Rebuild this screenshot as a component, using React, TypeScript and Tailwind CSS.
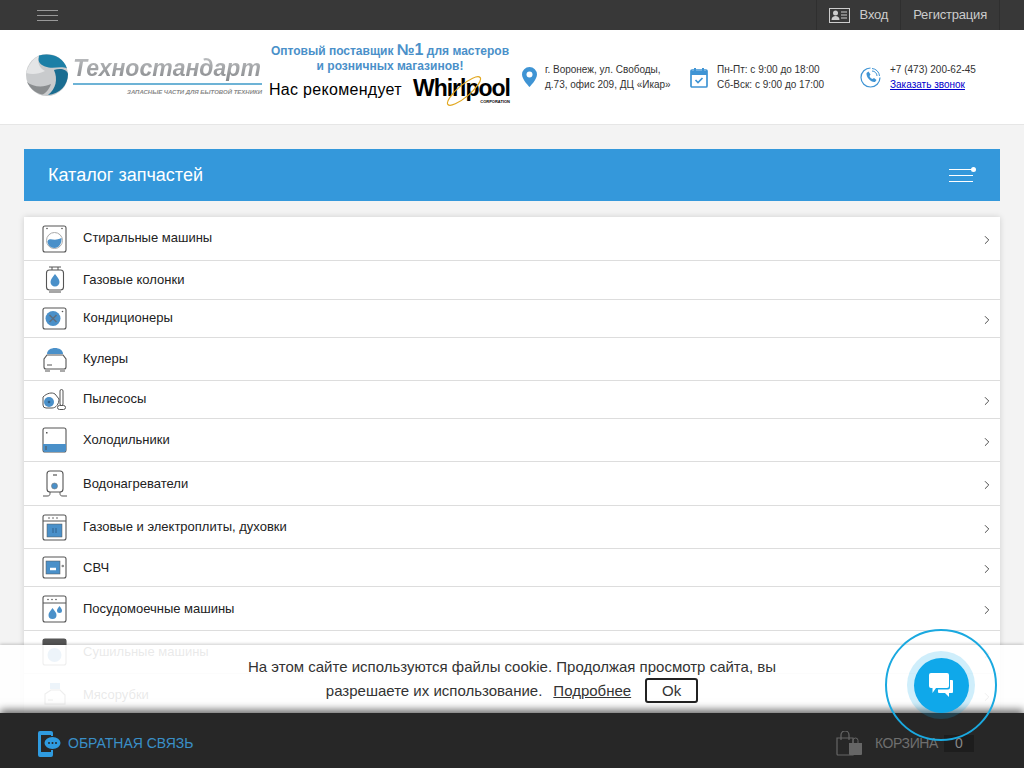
import React from 'react';
import { ChevronRight } from 'lucide-react';

const stroke = '#555555';
const blue = '#4a90c9';

function Washer() {
  return (
    <svg width="26" height="28" viewBox="0 0 26 28" fill="none">
      <rect x="1" y="1" width="23" height="26" rx="2" stroke={stroke} strokeWidth="1.1" />
      <circle cx="5" cy="3.5" r="0.8" fill={stroke} />
      <circle cx="20" cy="3.5" r="0.8" fill={stroke} />
      <circle cx="12.5" cy="15.500" r="8" stroke="#aaaaaa" strokeWidth="1" />
      <path d="M5.500 16c3-4 6 1 14-3 .5 6-3 10-7 10s-7-3-7-7z" fill={blue} />
    </svg>
  );
}

function GasHeater() {
  return (
    <svg width="26" height="28" viewBox="0 0 26 28" fill="none">
      <path d="M7 1h12M10 1v3M16 1v3" stroke={stroke} />
      <rect x="4.500" y="4" width="17" height="20" rx="3" stroke={stroke} strokeWidth="1.1" />
      <path d="M7 26h12" stroke="#888888" strokeWidth="1.500" />
      <path d="M13 8c2 3 4.500 5 4.500 8a4.500 4.500 0 0 1-9 0c0-3 2.500-5 4.500-8z" fill={blue} />
    </svg>
  );
}

function Conditioner() {
  return (
    <svg width="26" height="24" viewBox="0 0 26 24" fill="none">
      <rect x="1" y="1" width="23" height="21" rx="2" stroke={stroke} strokeWidth="1.1" />
      <circle cx="11" cy="11.5" r="7.500" fill={blue} />
      <path d="M7.500 8l7 7M14.500 8l-7 7" stroke="#5d6f80" strokeWidth="1.500" />
      <circle cx="20.500" cy="4.500" r="0.8" fill={stroke} />
    </svg>
  );
}

function Cooler() {
  return (
    <svg width="26" height="26" viewBox="0 0 26 26" fill="none">
      <path d="M5 8c0-4 4-6 8-6s8 2 8 6z" fill={blue} />
      <path d="M5 9h16l3 4v8a2 2 0 0 1-2 2H4a2 2 0 0 1-2-2v-8z" stroke={stroke} strokeWidth="1.1" />
      <path d="M5 19h5M3 25h5M18 25h5" stroke={stroke} />
    </svg>
  );
}

function Vacuum() {
  return (
    <svg width="26" height="22" viewBox="0 0 26 22" fill="none">
      <path d="M1 8c4-4 9-5 12-3l4 5c0 5-3 9-7 9H4a3 3 0 0 1-3-3z" stroke={stroke} />
      <circle cx="7" cy="13" r="5" fill={blue} />
      <circle cx="7" cy="13" r="1.300" fill="#2f5f88" />
      <rect x="18" y="0.500" width="3" height="16" rx="1.500" stroke={stroke} />
      <rect x="15.500" y="16.500" width="8" height="4" rx="2" stroke={stroke} />
    </svg>
  );
}

function Fridge() {
  return (
    <svg width="26" height="27" viewBox="0 0 26 27" fill="none">
      <rect x="1" y="1" width="23" height="24" rx="2" stroke={stroke} strokeWidth="1.1" />
      <path d="M1 17h23v6a2 2 0 0 1-2 2H3a2 2 0 0 1-2-2z" fill={blue} />
      <rect x="4" y="5" width="1.500" height="1.500" fill={stroke} />
      <rect x="3.500" y="19" width="1" height="4" fill={stroke} />
    </svg>
  );
}

function WaterHeater() {
  return (
    <svg width="26" height="28" viewBox="0 0 26 28" fill="none">
      <rect x="5" y="1" width="16" height="21" rx="3" stroke={stroke} strokeWidth="1.1" />
      <path d="M11 5h4" stroke={stroke} strokeWidth="1.200" />
      <circle cx="12.500" cy="16" r="3" fill={blue} stroke="#777777" strokeWidth="0.6" />
      <path d="M1 26h4c3 0 3-1 3-4M25 26h-4c-3 0-3-1-3-4" stroke={stroke} />
    </svg>
  );
}

function Stove() {
  return (
    <svg width="26" height="27" viewBox="0 0 26 27" fill="none">
      <rect x="1" y="1" width="23" height="25" rx="2" stroke={stroke} strokeWidth="1.1" />
      <path d="M1 7h23" stroke={stroke} />
      <circle cx="7" cy="4" r="0.8" fill={stroke} />
      <circle cx="11" cy="4" r="0.8" fill={stroke} />
      <circle cx="15" cy="4" r="0.8" fill={stroke} />
      <rect x="5" y="10" width="15" height="13" fill={blue} stroke={stroke} strokeWidth="0.5" />
      <path d="M11 14v5M14 14v5" stroke="#2f5f88" strokeWidth="0.9" />
    </svg>
  );
}

function Microwave() {
  return (
    <svg width="26" height="24" viewBox="0 0 26 24" fill="none">
      <rect x="1" y="1" width="23" height="21" rx="2" stroke={stroke} strokeWidth="1.1" />
      <rect x="4" y="5" width="14" height="13" fill={blue} stroke={stroke} strokeWidth="0.5" />
      <path d="M8 13h6" stroke="#ffffff" strokeWidth="2.500" />
      <circle cx="20.800" cy="10" r="1.300" fill="#888888" />
    </svg>
  );
}

function Dishwasher() {
  return (
    <svg width="26" height="28" viewBox="0 0 26 28" fill="none">
      <rect x="1" y="1" width="23" height="26" rx="2" stroke={stroke} strokeWidth="1.1" />
      <path d="M1 8h23" stroke={stroke} />
      <circle cx="6" cy="4.500" r="0.8" fill={stroke} />
      <circle cx="10" cy="4.500" r="0.8" fill={stroke} />
      <circle cx="14" cy="4.500" r="0.8" fill={stroke} />
      <path d="M10.500 13c2 3 4 4.500 4 7a4 4 0 0 1-8 0c0-2.500 2-4 4-7z" fill={blue} />
      <path d="M17.500 11c1.300 2 2.500 3 2.500 4.500a2.500 2.500 0 0 1-5 0c0-1.500 1.200-2.500 2.500-4.500z" fill={blue} />
    </svg>
  );
}

function Dryer() {
  return (
    <svg width="26" height="28" viewBox="0 0 26 28" fill="none">
      <rect x="1" y="1" width="23" height="26" rx="2" stroke={stroke} strokeWidth="1.1" />
      <path d="M1 1h23v6H1z" fill={stroke} />
      <circle cx="12.500" cy="17" r="7" fill={blue} />
    </svg>
  );
}

function Grinder() {
  return (
    <svg width="26" height="26" viewBox="0 0 26 26" fill="none">
      <path d="M8 1h10v6H8z" fill={blue} />
      <path d="M3 12l6-4h9l5 5v9H3z" stroke={stroke} strokeWidth="1.1" />
      <path d="M6 18h5" stroke={stroke} />
    </svg>
  );
}

const rows = [
  { name: 'Стиральные машины', icon: <Washer />, h: 'h-[44px]', text: 'mb-[2px]', arrow: true },
  { name: 'Газовые колонки', icon: <GasHeater />, h: 'h-[39px]', text: '', arrow: false },
  { name: 'Кондиционеры', icon: <Conditioner />, h: 'h-[38px]', text: 'mb-[2px]', arrow: true },
  { name: 'Кулеры', icon: <Cooler />, h: 'h-[43px]', text: '', arrow: false },
  { name: 'Пылесосы', icon: <Vacuum />, h: 'h-[38px]', text: 'mb-[2px]', arrow: true },
  { name: 'Холодильники', icon: <Fridge />, h: 'h-[43px]', text: '', arrow: true },
  { name: 'Водонагреватели', icon: <WaterHeater />, h: 'h-[44px]', text: '', arrow: true },
  { name: 'Газовые и электроплиты, духовки', icon: <Stove />, h: 'h-[43px]', text: '', arrow: true },
  { name: 'СВЧ', icon: <Microwave />, h: 'h-[38px]', text: '', arrow: true },
  { name: 'Посудомоечные машины', icon: <Dishwasher />, h: 'h-[44px]', text: '', arrow: true },
  { name: 'Сушильные машины', icon: <Dryer />, h: 'h-[43px]', text: '', arrow: true },
  { name: 'Мясорубки', icon: <Grinder />, h: 'h-[43px]', text: '', arrow: true },
];

function Logo() {
  return (
    <div className="flex items-center w-[244px] shrink-0 mb-[4px]">
      <svg width="46" height="46" viewBox="0 0 46 46" className="shrink-0">
        <circle cx="23" cy="23" r="21" fill="#c9cbcd" />
        <path d="M15 3.500c10-3 24 0 28 13-6-3-14 1-22-2-6-2-8-7-6-11z" fill="#1c7fa6" />
        <path d="M44 22c0 11-8 20-20 21 8-6 10-16 6-25 6-2 13-1 14 4z" fill="#1a6d91" />
        <path d="M3 30c6 5 16 6 24 2-2 6-6 10-9 10.500C11 41 6 36 3 30z" fill="#8a8d8f" />
        <path d="M2.500 21C4 13 9 7 15 4c-2 6 0 12 6 15-6 3-13 4-18.500 2z" fill="#e4e5e6" />
      </svg>
      <div className="ml-[3px] w-[189px] flex flex-col">
        <span className="text-[23px] leading-[28px] italic font-bold bg-gradient-to-b from-[#c2c4c6] to-[#85878a] bg-clip-text text-transparent whitespace-nowrap">Техностандарт</span>
        <div className="h-[2px] bg-[#6db3d6] mt-[1px]" />
        <span className="mt-[3px] text-[6px] leading-[8px] italic font-bold text-[#8a8a8a] text-right whitespace-nowrap">ЗАПАСНЫЕ ЧАСТИ ДЛЯ БЫТОВОЙ ТЕХНИКИ</span>
      </div>
    </div>
  );
}

function Promo() {
  return (
    <div className="w-[244px] shrink-0 flex flex-col mb-[11px]">
      <p className="text-center text-[12px] leading-[15px] font-bold text-[#4a90c9] whitespace-nowrap">
        Оптовый поставщик <span className="text-[16px]">№1</span> для мастеров
      </p>
      <p className="text-center text-[12px] leading-[15px] font-bold text-[#4a90c9]">и розничных магазинов!</p>
      <div className="flex items-center justify-between mt-[1px] pl-[1px] pr-[2px]">
        <span className="text-[16px] pt-[3px] text-black tracking-[0.3px] whitespace-nowrap">Нас рекомендует</span>
        <span className="relative text-[23px] leading-[26px] font-bold text-black tracking-[-1px]">
          Whirlpool
          <svg width="36" height="32" viewBox="0 0 36 32" fill="none" className="absolute left-[33px] top-0">
            <ellipse cx="18" cy="16" rx="21" ry="6" transform="rotate(-40 18 16)" stroke="#e2a820" strokeWidth="1.200" />
          </svg>
          <span className="absolute right-0 top-[24px] text-[4px] leading-[5px] tracking-normal whitespace-nowrap">CORPORATION</span>
        </span>
      </div>
    </div>
  );
}

export default function App() {
  return (
    <div className="relative h-screen overflow-hidden bg-[#f3f3f3] font-['Liberation_Sans',Arial,sans-serif]">
      <div className="h-[30px] bg-[#383838] flex items-center justify-between pl-[37px] pr-[24px]">
        <div className="flex flex-col gap-[4px] w-[21px]">
          <div className="h-px bg-[#999999]" />
          <div className="h-px bg-[#999999]" />
          <div className="h-px bg-[#999999]" />
        </div>
        <div className="flex h-full text-[13px] text-[#cccccc]">
          <div className="flex items-center border-l border-[#2f2f2f] pl-[12px] pr-[12px]">
            <svg width="21" height="15" viewBox="0 0 21 15" fill="none">
              <rect x="0.500" y="0.500" width="20" height="14" stroke="#cccccc" />
              <circle cx="6.500" cy="5" r="2.500" fill="#cccccc" />
              <path d="M2.500 12c0-3 2-4 4-4s4 1 4 4z" fill="#cccccc" />
              <path d="M12 4h6M12 7h6M12 10h6" stroke="#cccccc" />
            </svg>
            <span className="ml-[10px] tracking-[-0.2px]">Вход</span>
          </div>
          <div className="flex items-center border-l border-r border-[#2f2f2f] pl-[12px] pr-[12px] tracking-[-0.2px]">Регистрация</div>
        </div>
      </div>

      <div className="h-[95px] bg-white border-b border-[#e6e6e6] flex items-center pl-[24px]">
        <Logo />
        <Promo />
        <div className="flex items-center w-[168px] ml-[10px] shrink-0">
          <svg width="15" height="20" viewBox="0 0 15 20" className="shrink-0">
            <path d="M7.500 0A7.500 7.500 0 0 1 15 7.500C15 12.500 7.500 20 7.500 20S0 12.500 0 7.500A7.500 7.500 0 0 1 7.500 0z" fill="#3f94d4" />
            <circle cx="7.500" cy="7.500" r="3" fill="#ffffff" />
          </svg>
          <div className="ml-[8px] text-[10px] leading-[15px] text-[#333333] whitespace-nowrap">г. Воронеж, ул. Свободы,<br />д.73, офис 209, ДЦ «Икар»</div>
        </div>
        <div className="flex items-center w-[170px] shrink-0">
          <svg width="18" height="21" viewBox="0 0 18 21" fill="none">
            <rect x="1" y="3" width="16" height="17" rx="1" stroke="#3f94d4" strokeWidth="1.700" />
            <path d="M1 4h16v4H1z" fill="#3f94d4" />
            <path d="M5 1v4M13 1v4" stroke="#3f94d4" strokeWidth="2" />
            <path d="M5.500 13l2.500 2.500 4.500-4.500" stroke="#3f94d4" strokeWidth="1.700" />
          </svg>
          <div className="ml-[9px] text-[10px] leading-[15px] text-[#333333] whitespace-nowrap">Пн-Пт: с 9:00 до 18:00<br />Сб-Вск: с 9:00 до 17:00</div>
        </div>
        <div className="flex items-center shrink-0">
          <svg width="21" height="21" viewBox="0 0 21 21" fill="none">
            <path d="M10.500 1a9.500 9.500 0 1 0 9.500 9.500" stroke="#3f94d4" strokeWidth="1.200" />
            <path d="M12 4a5 5 0 0 1 5 5M12 1.500a8 8 0 0 1 7.500 7.500" stroke="#3f94d4" strokeWidth="1" />
            <path d="M6.500 6l2-1.500 2 3-1 1.500c.5 1.500 1.500 2.500 3 3l1.500-1 2.500 2-1.500 2c-4 .5-9-4.500-8.500-9z" fill="#3f94d4" />
          </svg>
          <div className="ml-[9px] text-[10px] leading-[15px] text-[#333333] whitespace-nowrap">
            +7 (473) 200-62-45<br />
            <a href="#" className="text-[#0000cc] underline">Заказать звонок</a>
          </div>
        </div>
      </div>

      <div className="px-[24px] pt-[24px]">
        <div className="h-[52px] bg-[#3498db] flex items-center justify-between pl-[24px] pr-[27px]">
          <h1 className="text-[18px] text-white">Каталог запчастей</h1>
          <div className="relative flex flex-col gap-[5px] w-[24px]">
            <div className="h-px bg-white" />
            <div className="h-px bg-white" />
            <div className="h-px bg-white" />
            <div className="absolute right-[-3px] top-[-2px] size-[5px] rounded-full bg-white" />
          </div>
        </div>

        <div className="mt-[16px] bg-white shadow-[0_0_6px_rgba(0,0,0,0.15)]">
          {rows.map((row) => (
            <div key={row.name} className={`${row.h} flex items-center border-b border-[#dddddd] pl-[18px] pr-[6px]`}>
              <div className="w-[26px] flex justify-center shrink-0">{row.icon}</div>
              <span className={`${row.text} ml-[15px] text-[13px] text-[#222222]`}>{row.name}</span>
              {row.arrow && <ChevronRight size={14} strokeWidth={1.5} className="ml-auto text-[#333333] mt-[3px]" />}
            </div>
          ))}
        </div>
      </div>

      <div className="absolute left-0 right-0 bottom-[55px] h-[68px] bg-white/90 shadow-[0_-1px_3px_rgba(0,0,0,0.2)] flex flex-col items-center pt-[10px] text-[15px] leading-[23px] text-[#333333]">
        <p>На этом сайте используются файлы cookie. Продолжая просмотр сайта, вы</p>
        <div className="flex items-center">
          <span>разрешаете их использование.</span>
          <a href="#" className="ml-[11px] underline">Подробнее</a>
          <button className="ml-[14px] w-[53px] h-[25px] border-2 border-[#222222] rounded-[3px] text-[15px] leading-none">Ok</button>
        </div>
      </div>

      <div className="absolute left-0 right-0 bottom-0 h-[55px] bg-[#272727] shadow-[0_-3px_8px_rgba(0,0,0,0.6)] flex items-center pl-[38px] pr-[50px] pt-[6px]">
        <svg width="23" height="26" viewBox="0 0 23 26" fill="none">
          <path d="M2 0h11a2 2 0 0 1 2 2v3h-2V4H3v17h10v-2h2v5a2 2 0 0 1-2 2H2a2 2 0 0 1-2-2V2a2 2 0 0 1 2-2z" fill="#2f9be0" />
          <ellipse cx="14.500" cy="12" rx="8" ry="6" fill="#2f9be0" />
          <circle cx="11" cy="12" r="1" fill="#272727" />
          <circle cx="14.500" cy="12" r="1" fill="#272727" />
          <circle cx="18" cy="12" r="1" fill="#272727" />
        </svg>
        <span className="ml-[7px] text-[14px] text-[#3a8fc7]">ОБРАТНАЯ СВЯЗЬ</span>
        <div className="ml-auto flex items-center">
          <svg width="27" height="25" viewBox="0 0 27 25" fill="none">
            <path d="M1 7h16v17H2a1 1 0 0 1-1-1z" stroke="#666666" strokeWidth="1.200" />
            <path d="M5 9V4a4 4 0 0 1 8 0v5" stroke="#666666" strokeWidth="1.200" />
            <path d="M13 12h13v11a1 1 0 0 1-1 1H14a1 1 0 0 1-1-1z" fill="#666666" />
            <path d="M17 12V9.500a2.500 2.500 0 0 1 5 0V12" stroke="#666666" />
          </svg>
          <span className="ml-[12px] text-[14px] text-[#6f6f6f] tracking-[-0.4px]">КОРЗИНА</span>
          <span className="ml-[6px] w-[30px] h-[17px] bg-[#1d1d1d] text-[#888888] text-[14px] leading-[17px] text-center">0</span>
        </div>
      </div>

      <div className="absolute left-[885px] top-[629px] size-[112px] rounded-full border-2 border-[#1aa9e0] flex items-center justify-center">
        <div className="size-[68px] rounded-full bg-[#0fa8ea]/20 flex items-center justify-center">
          <div className="size-[55px] rounded-full bg-[#0fa8ea] flex items-center justify-center">
            <svg width="24" height="24" viewBox="0 0 24 24" fill="white">
              <path d="M2 0h16a2 2 0 0 1 2 2v11a2 2 0 0 1-2 2H7l-3.500 5v-5H2a2 2 0 0 1-2-2V2a2 2 0 0 1 2-2z" />
              <path d="M21 7h2a1 1 0 0 1 1 1v11a1 1 0 0 1-1 1h-3v4l-4-4H10a1 1 0 0 1-1-1v-2.500h10a2 2 0 0 0 2-2z" />
            </svg>
          </div>
        </div>
      </div>
    </div>
  );
}
